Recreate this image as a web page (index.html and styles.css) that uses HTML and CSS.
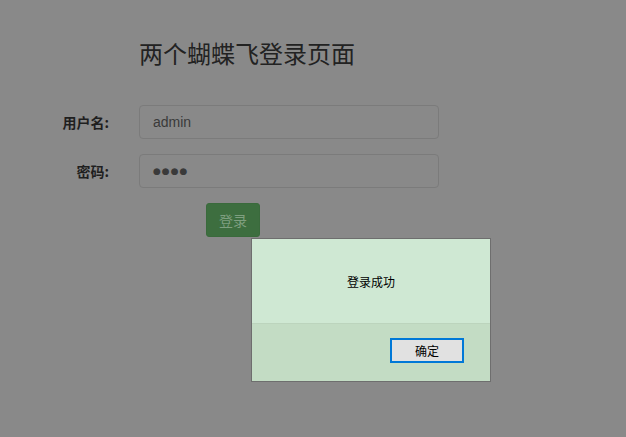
FILE: index.html
```html
<!DOCTYPE html>
<html lang="zh">
<head>
<meta charset="utf-8">
<title>两个蝴蝶飞登录页面</title>
<link rel="stylesheet" href="styles.css">
</head>
<body>
<div class="page">
  <h1 class="title">两个蝴蝶飞登录页面</h1>
  <form class="form">
    <div class="row">
      <label class="label">用户名:</label>
      <div class="input">admin</div>
    </div>
    <div class="row">
      <label class="label">密码:</label>
      <div class="input dots">●●●●</div>
    </div>
    <div class="actions">
      <span class="btn">登录</span>
    </div>
  </form>
</div>
<div class="dialog">
  <div class="dialog-body">登录成功</div>
  <div class="dialog-foot">
    <span class="ok">确定</span>
  </div>
</div>
</body>
</html>
```
FILE: styles.css
```css
html, body {
  margin: 0;
  padding: 0;
  background: #898989;
  width: 626px;
  height: 437px;
  overflow: hidden;
  font-family: "Liberation Sans", "Noto Sans CJK SC", sans-serif;
}
.page {
  padding-top: 36px;
}
.title {
  margin: 0 0 35px 139px;
  font-size: 24px;
  font-weight: normal;
  color: #222;
  line-height: 34px;
  font-family: "Noto Sans CJK SC", sans-serif;
}
.form {
  display: flex;
  flex-direction: column;
  gap: 15px;
}
.row {
  display: flex;
  align-items: center;
}
.label {
  width: 139px;
  text-align: right;
  padding-right: 30px;
  box-sizing: border-box;
  font-size: 14px;
  font-weight: bold;
  color: #1f1f1f;
  font-family: "Noto Sans CJK SC", sans-serif;
}
.input {
  width: 300px;
  height: 34px;
  box-sizing: border-box;
  border: 1px solid #7b7b7b;
  border-radius: 4px;
  padding: 0 13px;
  display: flex;
  align-items: center;
  font-size: 14px;
  color: #3a3a3a;
}
.dots {
  font-size: 9px;
  letter-spacing: 1px;
  color: #3a3a3a;
  font-family: "DejaVu Sans", sans-serif;
}
.actions {
  padding-left: 206px;
}
.btn {
  display: inline-flex;
  align-items: center;
  justify-content: center;
  width: 54px;
  height: 34px;
  box-sizing: border-box;
  background: #3d6e3f;
  border: 1px solid #3a6a3c;
  border-radius: 3px;
  color: #7f9f80;
  font-size: 14px;
  font-family: "Noto Sans CJK SC", sans-serif;
}
.dialog {
  position: absolute;
  left: 251px;
  top: 238px;
  width: 240px;
  height: 144px;
  box-sizing: border-box;
  border: 1px solid #6e6e6e;
  background: #c3dcc4;
  display: flex;
  flex-direction: column;
  font-family: "Noto Sans CJK SC", sans-serif;
}
.dialog-body {
  height: 84px;
  background: #cfe8d3;
  border-bottom: 1px solid #bcd4bd;
  display: flex;
  align-items: center;
  justify-content: center;
  font-size: 12px;
  color: #000;
}
.dialog-foot {
  flex: 1;
  display: flex;
  justify-content: flex-end;
  align-items: flex-start;
  padding: 14px 26px 0 0;
}
.ok {
  width: 74px;
  height: 25px;
  box-sizing: border-box;
  border: 2px solid #0078d7;
  background: #e1e1e1;
  display: flex;
  align-items: center;
  justify-content: center;
  font-size: 12px;
  color: #000;
}
```
